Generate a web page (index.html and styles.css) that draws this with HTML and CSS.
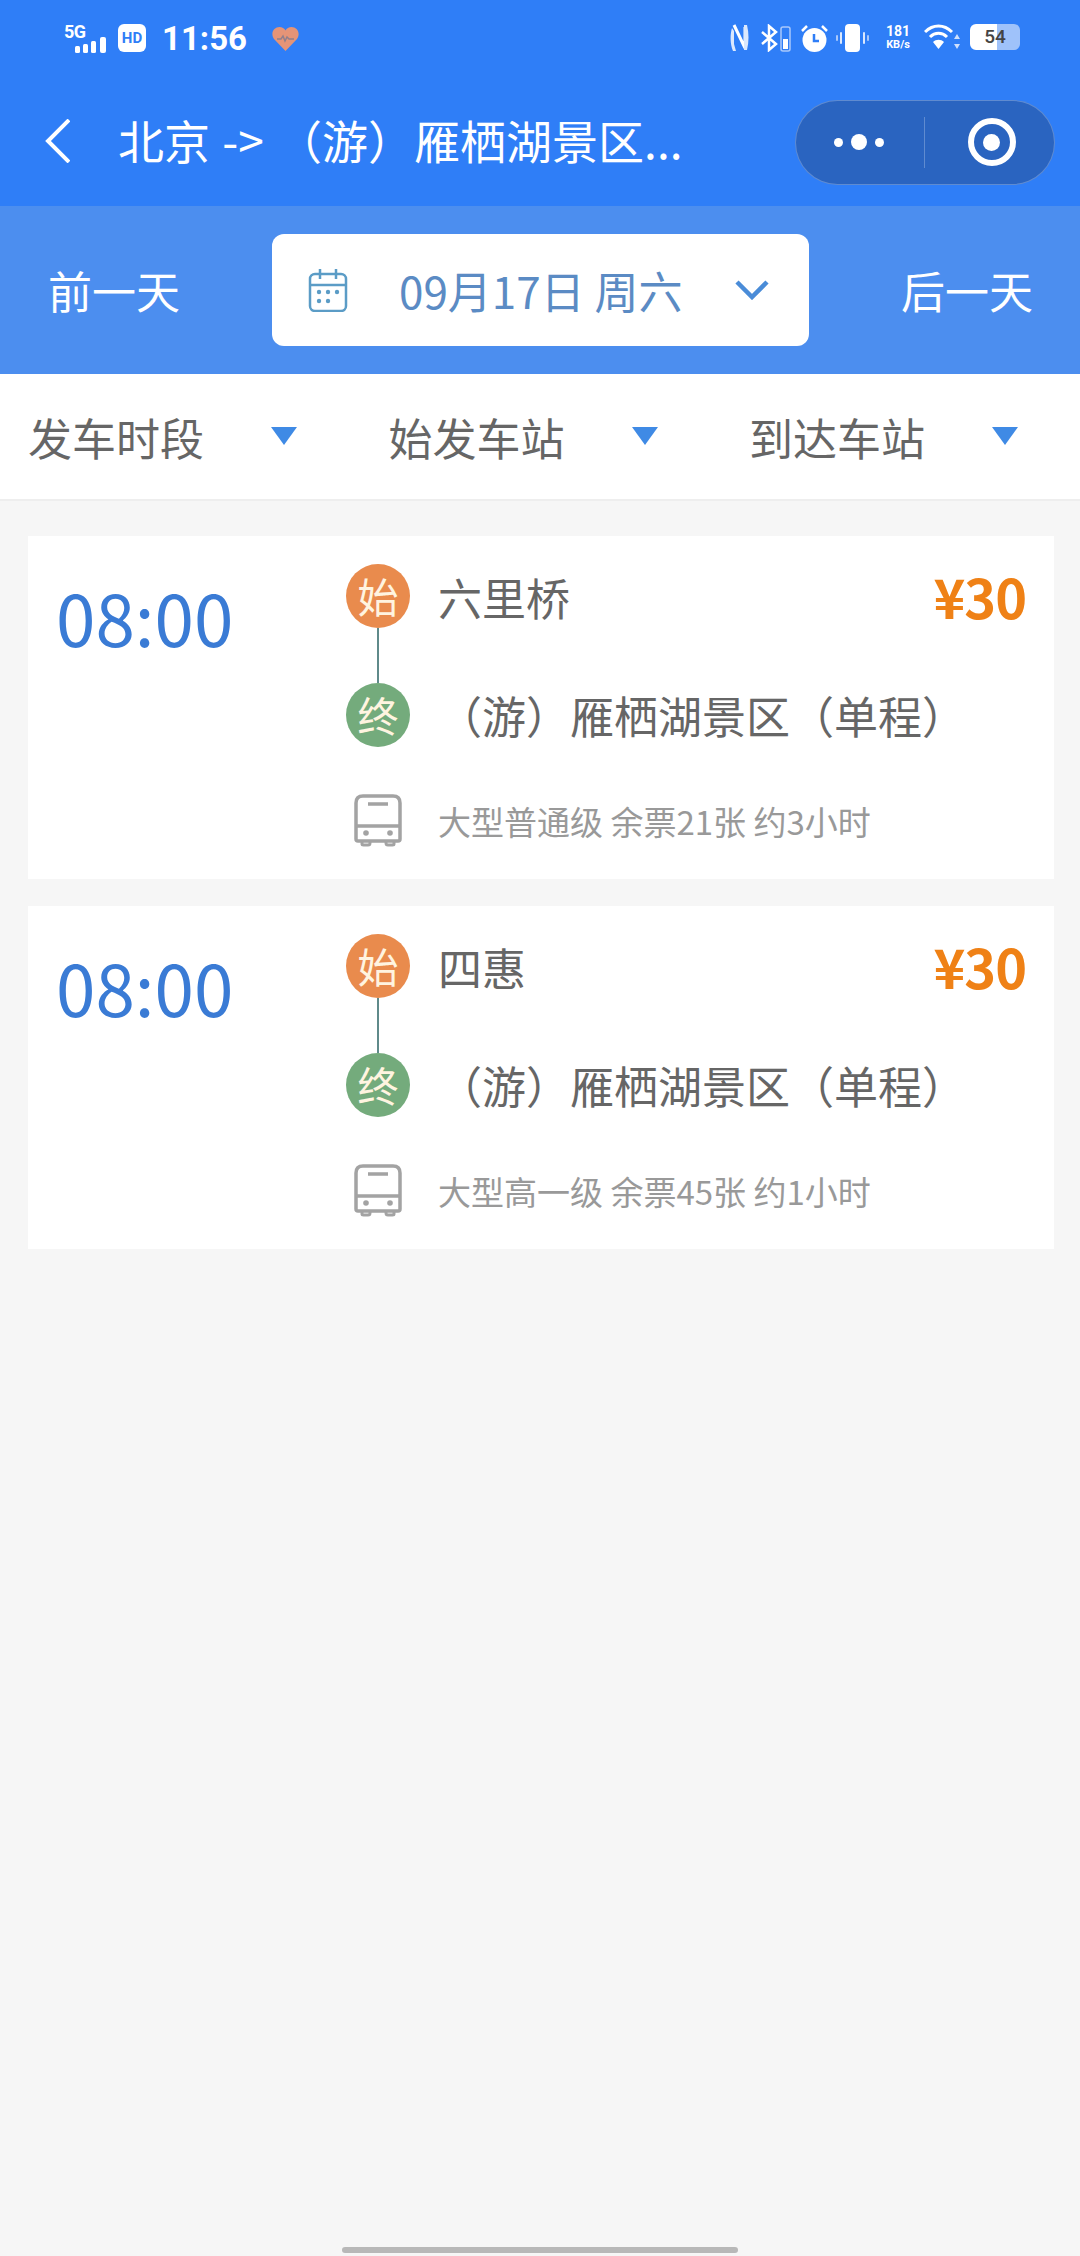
FILE: index.html
```html
<!DOCTYPE html>
<html lang="zh-CN">
<head>
  <meta charset="UTF-8">
  <meta name="viewport" content="width=device-width, initial-scale=1.0">
  <title>北京 -> （游）雁栖湖景区</title>
  <link rel="stylesheet" href="styles.css">
</head>
<body>
  <header class="top">
    <div class="status">
      <div class="status-left">
        <div class="signal">
          <span class="net">5G</span>
          <svg class="bars" width="32" height="16" viewBox="0 0 32 16" fill="#fff"><rect x="0" y="9" width="5" height="7" rx="1.5"/><rect x="8" y="7" width="5" height="9" rx="1.5"/><rect x="16" y="4" width="5" height="12" rx="1.5"/><rect x="25" y="0" width="6" height="16" rx="2"/></svg>
        </div>
        <span class="hd">HD</span>
        <span class="clock">11:56</span>
        <svg class="heart" width="27" height="24" viewBox="0 0 27 24"><path d="M13.500 24 L2 12 C-2 6 2 0 7.500 0 C10 0 12.500 1.500 13.500 3.500 C14.500 1.500 17 0 19.500 0 C25 0 29 6 25 12 Z" fill="#e59477"/><path d="M5 12 H9 L11 9 L13 14 L15 10 L17 12 H22" fill="none" stroke="#8f7f8c" stroke-width="1.500"/></svg>
      </div>
      <div class="status-right">
        <svg width="19" height="28" viewBox="0 0 19 28" fill="none" stroke="#fff"><path d="M4 1 L15 24 V3" stroke-width="3"/><path d="M2 4 C0 10 0 20 3 27 H6 L4 20 V7 Z M14 26 H17 C19 18 19 9 17 1 H14 Z" fill="#dbe8fd" stroke="none"/></svg>
        <svg class="bt" width="31" height="28" viewBox="0 0 31 28" fill="none" stroke="#fff" stroke-width="2.500"><path d="M1 8 L15 20 L8 26 V2 L15 8 L1 20"/><rect x="20" y="3" width="9" height="24" rx="2" stroke="#a9c8fb" stroke-width="1.500"/><rect x="22" y="15" width="5" height="10" fill="#fff" stroke="none"/></svg>
        <svg class="alarm" width="27" height="29" viewBox="0 0 27 29"><circle cx="13.500" cy="16" r="12" fill="#fff"/><path d="M13 10 V17 H18" fill="none" stroke="#2f7ef7" stroke-width="2.500"/><path d="M1 7 L6 2 M26 7 L21 2" stroke="#fff" stroke-width="2.500"/></svg>
        <svg class="vibrate" width="33" height="28" viewBox="0 0 33 28" fill="#fff"><rect x="9" y="0" width="15" height="28" rx="4"/><rect x="4" y="8" width="2" height="12" rx="1" fill="#dbe8fd"/><rect x="0" y="11" width="2" height="6" rx="1" fill="#a9c8fb"/><rect x="27" y="8" width="2" height="12" rx="1" fill="#dbe8fd"/><rect x="31" y="11" width="2" height="6" rx="1" fill="#a9c8fb"/></svg>
        <div class="speed"><span>181</span><span class="unit">KB/s</span></div>
        <svg class="wifi" width="36" height="27" viewBox="0 0 36 27" fill="none" stroke="#fff" stroke-width="3"><path d="M1 8 C9 0 20 0 28 8"/><path d="M6 13 C11 8 18 8 23 13"/><path d="M14.500 25 L9 18 C12 15 17 15 20 18 Z" fill="#fff" stroke="none"/><path d="M33 10 L36 15 H30 Z M33 25 L30 20 H36 Z" fill="#cfe0fc" stroke="none"/></svg>
        <div class="battery"><span class="battery-num">54</span></div>
      </div>
    </div>
    <nav class="nav">
      <svg class="back" width="25" height="44" viewBox="0 0 25 44" fill="none" stroke="#fff" stroke-width="4"><path d="M24 1 L3 22 L24 43"/></svg>
      <h1 class="title">北京 -&gt; （游）雁栖湖景区...</h1>
      <div class="capsule">
        <div class="capsule-more"><i class="dot"></i><i class="dot dot-big"></i><i class="dot"></i></div>
        <div class="capsule-close"><i class="target"></i></div>
      </div>
    </nav>
  </header>

  <section class="datebar">
    <span class="day-link">前一天</span>
    <div class="datebox">
      <svg width="40" height="44" viewBox="0 0 40 44" fill="none" stroke="#5b9cc6" stroke-width="2.500"><rect x="2" y="6" width="36" height="37" rx="5"/><path d="M2 17 H38 M12 1 V11 M28 1 V11"/><g fill="#5b9cc6" stroke="none"><circle cx="11" cy="24" r="2.200"/><circle cx="20" cy="24" r="2.200"/><circle cx="29" cy="24" r="2.200"/><circle cx="11" cy="33" r="2.200"/><circle cx="20" cy="33" r="2.200"/></g></svg>
      <span class="date-text">09月17日 周六</span>
      <svg class="date-arrow" width="34" height="20" viewBox="0 0 34 20" fill="none" stroke="#4a8cd8" stroke-width="4.500"><path d="M2 2 L17 17 L32 2"/></svg>
    </div>
    <span class="day-link">后一天</span>
  </section>

  <section class="filters">
    <div class="filter"><span>发车时段</span><i class="tri"></i></div>
    <div class="filter"><span>始发车站</span><i class="tri"></i></div>
    <div class="filter"><span>到达车站</span><i class="tri"></i></div>
  </section>

  <main class="list">
    <article class="card">
      <div class="time">08:00</div>
      <div class="route">
        <span class="badge badge-start">始</span>
        <span class="stop">六里桥</span>
        <span class="price">¥30</span>
        <i class="line"></i>
        <span class="badge badge-end">终</span>
        <span class="stop stop-end">（游）雁栖湖景区（单程）</span>
        <svg class="bus" width="48" height="53" viewBox="0 0 48 53" fill="none" stroke="#a3a3a3" stroke-width="3.500"><path d="M9 2 H39 Q46 2 46 9 V45 Q46 47 44 47 H4 Q2 47 2 45 V9 Q2 2 9 2 Z"/><path d="M14 10 H34 M2 32 H46"/><path d="M8 47 V50 Q8 51 9.500 51 H14 Q16 51 16 49 V47 M32 47 V49 Q32 51 34 51 H38.500 Q40 51 40 50 V47" stroke-width="3"/><g fill="#a3a3a3" stroke="none"><circle cx="12" cy="39" r="2.800"/><circle cx="36" cy="39" r="2.800"/></g></svg>
        <span class="info">大型普通级 余票21张 约3小时</span>
      </div>
    </article>
    <article class="card">
      <div class="time">08:00</div>
      <div class="route">
        <span class="badge badge-start">始</span>
        <span class="stop">四惠</span>
        <span class="price">¥30</span>
        <i class="line"></i>
        <span class="badge badge-end">终</span>
        <span class="stop stop-end">（游）雁栖湖景区（单程）</span>
        <svg class="bus" width="48" height="53" viewBox="0 0 48 53" fill="none" stroke="#a3a3a3" stroke-width="3.500"><path d="M9 2 H39 Q46 2 46 9 V45 Q46 47 44 47 H4 Q2 47 2 45 V9 Q2 2 9 2 Z"/><path d="M14 10 H34 M2 32 H46"/><path d="M8 47 V50 Q8 51 9.500 51 H14 Q16 51 16 49 V47 M32 47 V49 Q32 51 34 51 H38.500 Q40 51 40 50 V47" stroke-width="3"/><g fill="#a3a3a3" stroke="none"><circle cx="12" cy="39" r="2.800"/><circle cx="36" cy="39" r="2.800"/></g></svg>
        <span class="info">大型高一级 余票45张 约1小时</span>
      </div>
    </article>
  </main>

  <div class="homebar"></div>
</body>
</html>
```

FILE: styles.css
```css
* { margin: 0; padding: 0; box-sizing: border-box; }
html, body { height: 2256px; overflow: hidden; }
body {
  display: flex; flex-direction: column;
  background-color: #f6f6f6; color: #666;
  font-family: "Noto Sans CJK SC", "Noto Sans", sans-serif;
}

/* status bar + nav */
.top { background-color: #2f7ef7; color: #fff; height: 206px; flex: none; }
.status { height: 78px; display: flex; justify-content: space-between; align-items: flex-start; padding: 24px 60px 0 64px; }
.status-left, .status-right { display: flex; align-items: flex-start; }
.signal { position: relative; width: 44px; height: 28px; margin-right: 10px; }
.net { display: block; font: bold 18px/15px Roboto, sans-serif; letter-spacing: -0.5px; }
.bars { position: absolute; left: 11px; top: 13px; }
.hd {
  width: 28px; height: 28px; background: #fff; border-radius: 6px; margin-right: 16px;
  color: #2f7ef7; font: bold 15px/28px Roboto, sans-serif; text-align: center;
}
.clock { font: bold 33px/30px Roboto, sans-serif; margin-right: 25px; }
.heart { margin-top: 3px; }
.bt { margin-left: 12px; }
.alarm { margin-left: 9px; }
.vibrate { margin-left: 8px; }
.speed { margin-left: 15px; width: 28px; display: flex; flex-direction: column; align-items: center; font: bold 14px/14px Roboto, sans-serif; }
.speed .unit { font-size: 11px; line-height: 13px; }
.wifi { margin-left: 12px; }
.battery {
  margin-left: 10px; width: 50px; height: 26px; border-radius: 6px;
  background: linear-gradient(90deg, #fff 0 54%, #9fc2fa 54%);
  text-align: center; color: #444; font: 500 19px/26px Roboto, sans-serif;
}

.nav { height: 128px; display: flex; align-items: center; padding: 0 25px 0 45px; }
.back { flex: none; margin-bottom: 2px; }
.title { font-size: 46px; line-height: 60px; font-weight: 400; word-spacing: 2px; margin: 0 0 6px 48px; white-space: nowrap; flex: 1; }
.capsule {
  flex: none; width: 260px; height: 85px; border-radius: 43px;
  background-color: #2a64c0; border: 1px solid rgba(255, 255, 255, 0.25);
  display: flex; align-items: center;
}
.capsule-more { width: 129px; height: 51px; border-right: 1px solid rgba(255, 255, 255, 0.25); display: flex; align-items: center; gap: 8px; padding-left: 38px; }
.dot { width: 9px; height: 9px; border-radius: 50%; background: #fff; }
.dot-big { width: 16px; height: 16px; }
.capsule-close { flex: 1; display: flex; justify-content: center; padding-left: 4px; }
.target {
  width: 48px; height: 48px; border-radius: 50%; border: 6px solid #fff; display: flex; align-items: center; justify-content: center;
}
.target::before { content: ""; width: 17px; height: 17px; border-radius: 50%; background: #fff; }

/* date switcher */
.datebar { height: 168px; flex: none; background-color: #4c8eef; display: flex; justify-content: space-between; align-items: center; padding: 0 47px 0 48px; }
.day-link { font-size: 44px; color: #fff; line-height: 60px; }
.datebox { width: 537px; height: 112px; background: #fff; border-radius: 12px; display: flex; align-items: center; padding: 0 40px 0 36px; }
.date-text { margin-left: 51px; font-size: 44px; line-height: 56px; color: #5b8bc4; white-space: nowrap; }
.date-arrow { margin-left: auto; }

/* filters */
.filters { height: 127px; flex: none; background: #fff; border-bottom: 2px solid #eee; display: grid; grid-template-columns: repeat(3, 360.5px); align-items: center; padding-left: 28px; }
.filter { display: flex; align-items: center; font-size: 44px; line-height: 60px; color: #666; }
.tri { margin-left: 67px; width: 0; height: 0; border-left: 13px solid transparent; border-right: 13px solid transparent; border-top: 18px solid #3f8ae5; margin-bottom: 2px; }

/* cards */
.list { flex: 1; padding: 35px 26px 0 28px; display: flex; flex-direction: column; gap: 27px; }
.card { height: 343px; background: #fff; display: flex; padding-top: 28px; }
.time { width: 318px; padding: 7px 0 0 28px; font-size: 71px; line-height: 90px; color: #3a7bd5; }
.route { flex: 1; display: grid; grid-template-columns: 64px 1fr auto; grid-template-rows: 64px 55px 64px auto; column-gap: 28px; padding-right: 28px; align-items: center; }
.badge { width: 64px; height: 64px; border-radius: 50%; color: #fff4e0; font-size: 41px; line-height: 62px; text-align: center; }
.badge-start { background-color: #e98b4d; }
.badge-end { background-color: #74ab7c; grid-column: 1; grid-row: 3; }
.stop { font-size: 44px; line-height: 60px; color: #666; white-space: nowrap; padding-top: 2px; }
.stop-end { grid-column: 2 / 4; grid-row: 3; padding-top: 0; }
.price { font-size: 54px; line-height: 60px; font-weight: 700; color: #ef8116; letter-spacing: -1px; }
.line { grid-column: 1; grid-row: 2; width: 2px; height: 55px; background: #5f8a8a; justify-self: center; }
.bus { grid-column: 1; grid-row: 4; justify-self: center; margin-top: 15px; }
.info { grid-column: 2 / 4; grid-row: 4; font-size: 33px; line-height: 46px; color: #999; margin-top: 15px; white-space: nowrap; }

.homebar { flex: none; width: 396px; height: 6px; margin: 0 auto 3px; border-radius: 3px; background: #b8b8b8; }
```
